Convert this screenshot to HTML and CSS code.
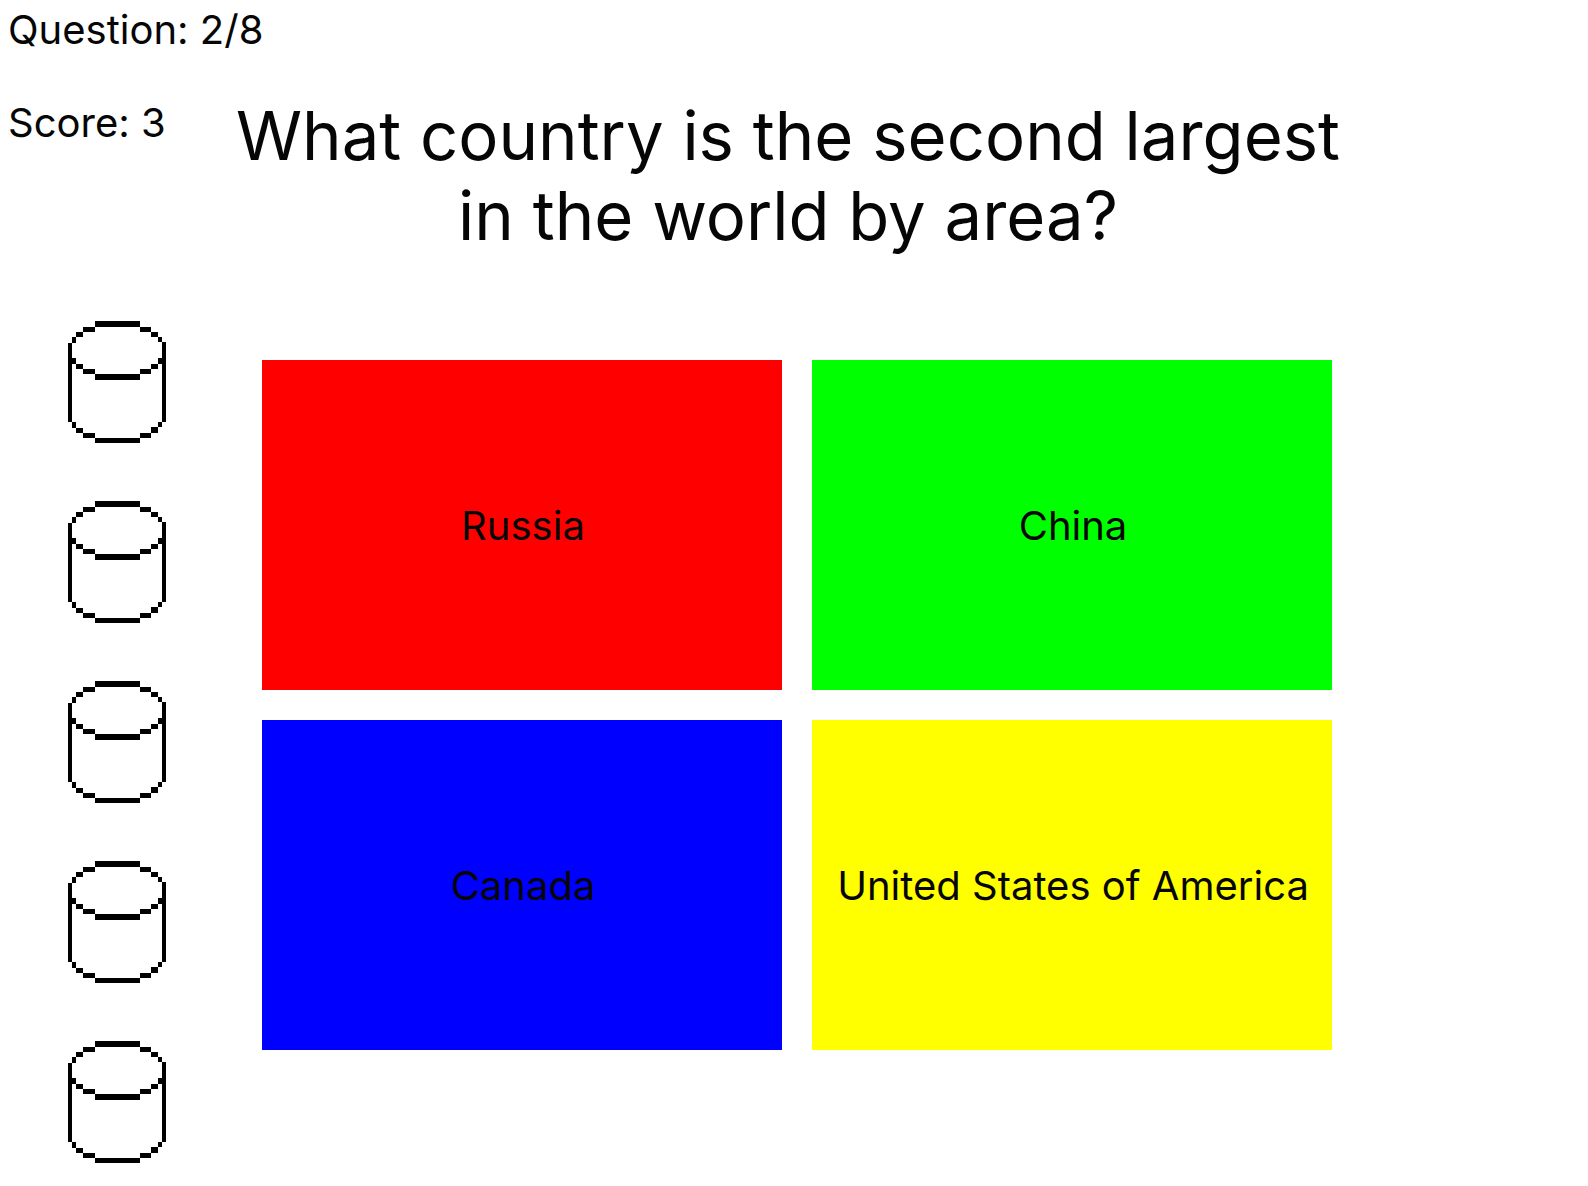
FILE: index.html
```html
<!DOCTYPE html>
<html lang="en">
<head>
<meta charset="utf-8">
<meta name="viewport" content="width=device-width, initial-scale=1">
<title>Geography quiz</title>
<link rel="stylesheet" href="styles.css">
</head>
<body>
<svg width="0" height="0" class="defs" aria-hidden="true">
  <symbol id="cylinder" viewBox="0 0 98 122">
    <path shape-rendering="crispEdges" d="M27 0H72V6H27zM15 6H27V11H15zM72 6H83V11H72zM8 11H15V16H8zM83 11H90V16H83zM4 16H8V22H4zM90 16H94V21H90zM0 22H4V101H0zM94 21H98V101H94zM4 37H8V43H4zM90 37H94V43H90zM8 43H15V48H8zM83 43H90V48H83zM15 48H27V53H15zM72 48H83V53H72zM27 53H72V59H27zM4 101H8V107H4zM90 101H94V106H90zM8 107H15V112H8zM83 106H90V112H83zM15 112H27V117H15zM72 112H83V117H72zM27 117H72V122H27z"/>
  </symbol>
</svg>
<div class="quiz">
  <aside class="side">
    <p class="status">Question: 2/8</p>
    <p class="status">Score: 3</p>
    <div class="cylinders">
      <svg class="cylinder"><use href="#cylinder"/></svg>
      <svg class="cylinder"><use href="#cylinder"/></svg>
      <svg class="cylinder"><use href="#cylinder"/></svg>
      <svg class="cylinder"><use href="#cylinder"/></svg>
      <svg class="cylinder"><use href="#cylinder"/></svg>
    </div>
  </aside>
  <main class="main">
    <h1 class="question">What country is the second largest in the world by area?</h1>
    <div class="answers">
      <button type="button" class="answer red">Russia</button>
      <button type="button" class="answer green">China</button>
      <button type="button" class="answer blue">Canada</button>
      <button type="button" class="answer yellow">United States of America</button>
    </div>
  </main>
</div>
</body>
</html>
```
FILE: styles.css
```css
* {
  box-sizing: border-box;
}

body {
  margin: 0;
  background: #fff;
  color: #060606;
  font-family: Inter, "Liberation Sans", sans-serif;
  font-size: 40px;
  line-height: 60px;
}

.defs {
  display: block;
}

.quiz {
  display: grid;
  grid-template-columns: 228px minmax(0, 1fr) 240px;
}

.side {
  display: flex;
  flex-direction: column;
  gap: 33px;
  padding-left: 8px;
}

.status {
  margin: 0;
  white-space: nowrap;
}

.cylinders {
  display: flex;
  flex-direction: column;
  gap: 58px;
  padding: 135px 0 0 60px;
}

.cylinder {
  display: block;
  width: 98px;
  height: 122px;
}

.main {
  padding-top: 96px;
}

.question {
  margin: 0;
  font-size: 67px;
  font-weight: 400;
  line-height: 80px;
  text-align: center;
}

.answers {
  display: grid;
  grid-template-columns: repeat(2, minmax(0, 1fr));
  grid-auto-rows: 330px;
  gap: 30px;
  padding: 104px 16px 0 34px;
}

.answer {
  padding: 2px 0 0 2px;
  border: 0;
  color: inherit;
  font: inherit;
  cursor: pointer;
}

.red {
  background: #f00;
}

.green {
  background: #0f0;
}

.blue {
  background: #00f;
}

.yellow {
  background: #ff0;
}
```
